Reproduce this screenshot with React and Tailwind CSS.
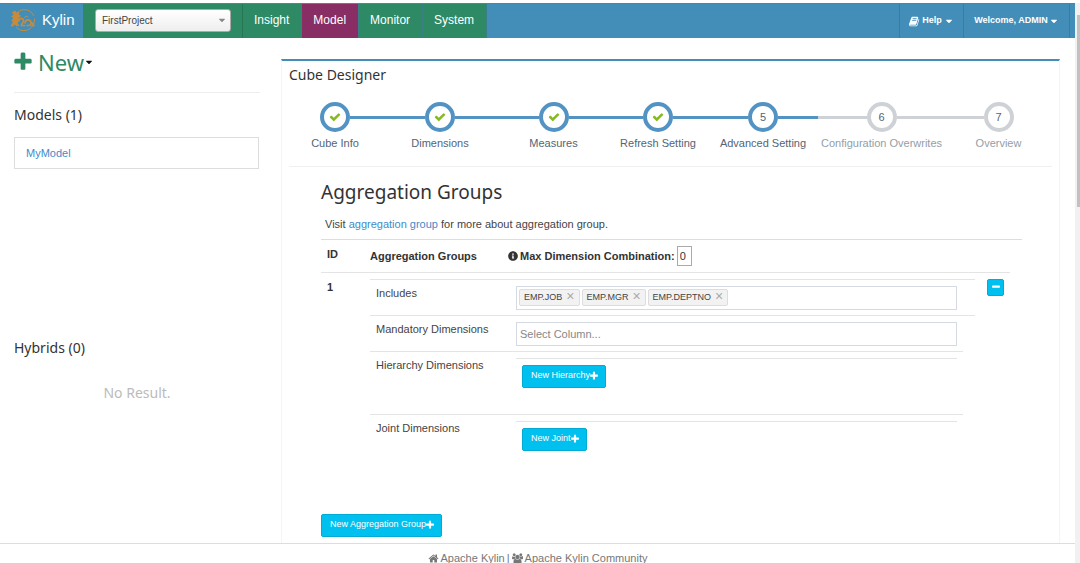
import React, { useState } from 'react';
import { FaCaretDown, FaInfoCircle } from 'react-icons/fa';

const ICONS = {
  plus: 'M1600 736v192q0 40-28 68t-68 28h-416v416q0 40-28 68t-68 28h-192q-40 0-68-28t-28-68v-416h-416q-40 0-68-28t-28-68v-192q0-40 28-68t68-28h416v-416q0-40 28-68t68-28h192q40 0 68 28t28 68v416h416q40 0 68 28t28 68z',
  minus: 'M1600 736v192q0 40-28 68t-68 28h-1216q-40 0-68-28t-28-68v-192q0-40 28-68t68-28h1216q40 0 68 28t28 68z',
  check: 'M1671 566q0 40-28 68l-724 724-136 136q-28 28-68 28t-68-28l-136-136-362-362q-28-28-28-68t28-68l136-136q28-28 68-28t68 28l294 295 656-657q28-28 68-28t68 28l136 136q28 28 28 68z',
  home: 'M1472 992v480q0 26-19 45t-45 19h-384v-384h-256v384h-384q-26 0-45-19t-19-45v-480q0-1 .5-3t.5-3l575-474 575 474q1 2 1 6zm223-69l-62 74q-8 9-21 11h-3q-13 0-21-7l-692-577-692 577q-12 8-24 7-13-2-21-11l-62-74q-8-10-7-23.5t11-21.5l719-599q32-26 76-26t76 26l244 204v-195q0-14 9-23t23-9h192q14 0 23 9t9 23v408l219 182q10 8 11 21.5t-7 23.5z',
  book: 'M1639 478q40 57 18 129l-275 906q-19 64-76.5 107.5t-122.5 43.5h-923q-77 0-148.5-53.5t-99.5-131.5q-24-67-2-127 0-4 3-27t4-37q1-8-3-21.5t-3-19.5q2-11 8-21t16.5-23.5 16.5-23.5q23-38 45-91.5t30-91.5q3-10 .5-30t-.5-28q3-11 17-28t17-23q21-36 42-92t25-90q1-9-2.5-32t.5-28q4-13 22-30.5t22-22.5q19-26 42.5-84.5t27.5-96.5q1-8-3-25.5t-2-26.5q2-8 9-18t18-23 17-21q8-12 16.5-30.5t15-35 16-36 19.5-32 26.5-23.5 36-11.5 47.5 5.5l-1 3q38-9 51-9h761q74 0 114 56t18 130l-274 906q-36 119-71.5 153.5t-128.5 34.5h-869q-27 0-38 15-11 16-1 43 24 70 144 70h923q29 0 56-15.5t35-41.5l300-987q7-22 5-57 38 15 59 43zm-1064 2q-4 13 2 22.5t20 9.5h608q13 0 25.5-9.5t16.5-22.5l21-64q4-13-2-22.5t-20-9.5h-608q-13 0-25.5 9.5t-16.5 22.5zm-83 256q-4 13 2 22.5t20 9.5h608q13 0 25.5-9.5t16.5-22.5l21-64q4-13-2-22.5t-20-9.5h-608q-13 0-25.5 9.5t-16.5 22.5z',
  users: 'M593 896q-162 5-265 128h-134q-82 0-138-40.500t-56-118.500q0-353 124-353 6 0 43.500 21t97.500 42.500 119 21.500q67 0 133-23-5 37-5 66 0 159 93 287zm1071 637q0 120-73 189.500t-194 69.500h-874q-121 0-194-69.500t-73-189.500q0-53 3.500-103.500t14-109 26.500-108.500 43-97.500 62-81 85.500-53.500 111.500-20q10 0 43 21.500t73 48 107 48 135 21.500 135-21.500 107-48 73-48 43-21.500q61 0 111.500 20t85.500 53.500 62 81 43 97.500 26.500 108.500 14 109 3.500 103.500zm-1024-1277q0 106-75 181t-181 75-181-75-75-181 75-181 181-75 181 75 75 181zm704 384q0 159-112.500 271.500t-271.500 112.500-271.500-112.500-112.500-271.500 112.500-271.500 271.500-112.500 271.500 112.500 112.500 271.500zm576 225q0 78-56 118.500t-138 40.500h-134q-103-123-265-128 93-128 93-287 0-29-5-66 66 23 133 23 59 0 119-21.500t97.500-42.500 43.500-21q124 0 124 353zm-128-609q0 106-75 181t-181 75-181-75-75-181 75-181 181-75 181 75 75 181z',
};

const Icon = ({ name, className }) => (
  <svg
    viewBox={name === 'users' ? '0 0 1920 1792' : '0 0 1792 1792'}
    fill="currentColor"
    className={className}
    aria-hidden="true"
  >
    <path d={ICONS[name]} />
  </svg>
);

const NAV = ['Insight', 'Model', 'Monitor', 'System'];

const STEPS = [
  'Cube Info',
  'Dimensions',
  'Measures',
  'Refresh Setting',
  'Advanced Setting',
  'Configuration Overwrites',
  'Overview',
];

const Logo = () => (
  <svg viewBox="0 0 26 24" className="h-6 w-[26px]" fill="none" stroke="#c98a3a" strokeLinecap="round" strokeLinejoin="round" aria-hidden="true">
    <path d="M10 2.6C15 .2 21 2 23.600 7.500M24.500 11C25 17 20 22.500 14 22.600C10.500 22.600 8 21.300 6.500 19.500" strokeWidth="1" />
    <path d="M2.500 4.500L5 3L6.500 5L9 3.500L8.500 6.500L10.500 8L8 10L9.500 12.500L7 15L9 17.500H6L4.500 16L3 18H1L3 14.500L2 12L4 10L1.500 8.500L4 7Z" fill="#c98a3a" strokeWidth=".8" />
    <path d="M8.500 12.500C10 9.500 13 10 13.500 12.500C14 15 11 15.500 11.500 17.500H14.500" strokeWidth="1.700" />
    <path d="M15 15C15.500 11 20 11 21 14C21.500 16 20.500 17.500 18.500 17.500H17M21 14.500C22.500 15.200 23.500 16.200 24 17.500H22" strokeWidth="1.700" />
    <path d="M14.500 9.500L16 8L18 9" strokeWidth="1" />
  </svg>
);

const Header = ({ active, onSelect }) => (
  <header className="mt-[3px] flex h-[35px] items-stretch border-t border-[#5b7f9b] bg-[#438eb9] text-white">
    <a href="#home" className="flex w-[83px] items-center gap-1.5 pb-0.5 pl-2.5 text-[15px]">
      <Logo />
      Kylin
    </a>
    <div className="flex items-stretch bg-[#2e8965]">
      <div className="flex w-40 items-center border-r border-[#277757] pr-[11px] pb-0.5 pl-3">
        <div className="relative w-full">
          <select
            aria-label="Project"
            className="block h-[23px] w-full appearance-none rounded-[3px] border border-[#aaa] bg-linear-to-b from-white to-[#eee] px-1.5 text-[10px] text-[#444]"
          >
            <option>FirstProject</option>
          </select>
          <FaCaretDown className="pointer-events-none absolute top-1.5 right-1 size-2.5 text-[#888]" />
        </div>
      </div>
      <nav className="flex items-stretch text-xs">
        {NAV.map((item) => (
          <a
            key={item}
            href={`#${item.toLowerCase()}`}
            onClick={() => onSelect(item)}
            className={`flex items-center border-r border-[#3a7f86] pr-3 pb-0.5 pl-[11px] ${
              active === item ? 'bg-[#892e65]' : ''
            }`}
          >
            {item}
          </a>
        ))}
      </nav>
    </div>
    <div className="ml-auto flex items-stretch pr-[5px] text-[9px] font-bold">
      <button type="button" className="flex w-16 items-center justify-center gap-0.5 border-l border-[#3a7ca3]">
        <Icon name="book" className="size-[11px]" />
        Help
        <FaCaretDown className="size-2.5" />
      </button>
      <button type="button" className="flex w-[107px] items-center justify-center gap-px border-x border-[#3a7ca3]">
        Welcome, ADMIN
        <FaCaretDown className="size-2.5" />
      </button>
    </div>
  </header>
);

const Sidebar = () => (
  <aside className="w-[260px] shrink-0 pl-3.5 font-['Noto_Sans',sans-serif] text-[#333]">
    <div className="border-b border-[#eee] pt-2.5 pb-4">
      <button type="button" className="-ml-0.5 flex h-7 items-center text-[22px] text-[#2e8965]">
        <Icon name="plus" className="mr-1 size-[22px]" />
        New
        <FaCaretDown className="size-2.5 text-[#111]" />
      </button>
    </div>
    <h3 className="mt-3 text-sm leading-5">Models (1)</h3>
    <ul className="mt-3 mr-px h-48 font-['Liberation_Sans',Arial,sans-serif] text-[11px]">
      <li className="border border-[#ddd] px-[11px] py-1.5 leading-[18px]">
        <a href="#mymodel" className="text-[#428bca]">MyModel</a>
      </li>
    </ul>
    <h3 className="mt-[9px] text-sm leading-5">Hybrids (0)</h3>
    <p className="mt-[25px] text-center text-sm leading-5 text-[#bbb]">No Result.</p>
  </aside>
);

const Steps = ({ current }) => (
  <ol className="grid grid-cols-[92fr_118fr_109fr_100fr_110fr_127fr_107fr] text-center text-[11px]">
    {STEPS.map((label, index) => {
      const number = index + 1;
      const reached = number <= current;
      const line = reached ? 'bg-[#5293c4]' : 'bg-[#ced1d6]';
      return (
        <li key={label}>
          <div className="flex items-center">
            <span className={`h-[3px] flex-1 ${index === 0 ? '' : line}`} />
            <span
              className={`flex size-[30px] items-center justify-center rounded-full border-4 bg-white text-[#546474] ${
                reached ? 'border-[#5293c4]' : 'border-[#ced1d6]'
              }`}
            >
              {number < current ? <Icon name="check" className="size-3 text-[#87ba21]" /> : number}
            </span>
            <span className={`h-[3px] flex-1 ${number === STEPS.length ? '' : line}`} />
          </div>
          <div className={`mt-1 leading-[14px] whitespace-nowrap ${reached ? 'text-[#546474]' : 'text-[#949ea7]'}`}>
            {label}
          </div>
        </li>
      );
    })}
  </ol>
);

const AddButton = ({ children }) => (
  <button
    type="button"
    className="flex h-[23px] items-center rounded-xs border border-[#00acd6] bg-[#00c0ef] pr-1.5 pl-2 text-[9px] text-white"
  >
    {children}
    <Icon name="plus" className="-ml-px size-2.5" />
  </button>
);

const FieldRow = ({ label, htmlFor, className, children }) => (
  <div className={`flex border-t border-[#e4e4e4] pt-1.5 pl-1.5 ${className}`}>
    <label htmlFor={htmlFor} className="w-[140px] shrink-0 leading-[14px]">
      {label}
    </label>
    {children}
  </div>
);

const AggregationGroup = () => {
  const [includes, setIncludes] = useState(['EMP.JOB', 'EMP.MGR', 'EMP.DEPTNO']);

  return (
    <div className="text-[#444]">
      <FieldRow label="Includes" htmlFor="includes" className="h-9 pr-[18px]">
        <div className="flex h-6 flex-1 items-center gap-0.5 border border-[#d5d9e2] px-0.5">
          {includes.map((column) => (
            <span
              key={column}
              className="flex h-[17px] items-center gap-1 rounded-xs border border-[#ddd] bg-[#f2f2f2] px-1 text-[9px] whitespace-nowrap"
            >
              {column}
              <button
                type="button"
                aria-label={`Remove ${column}`}
                onClick={() => setIncludes(includes.filter((c) => c !== column))}
                className="pb-1 text-sm leading-3 text-[#aaa]"
              >
                ×
              </button>
            </span>
          ))}
          <input id="includes" className="min-w-0 flex-1 outline-none" />
        </div>
      </FieldRow>
      <FieldRow label="Mandatory Dimensions" htmlFor="mandatory" className="h-9 pr-[18px]">
        <input
          id="mandatory"
          placeholder="Select Column..."
          className="h-6 min-w-0 flex-1 border border-[#d5d9e2] px-[3px] placeholder:text-[#888]"
        />
      </FieldRow>
      <FieldRow label="Hierarchy Dimensions" className="mr-3 h-[63px] pr-1.5">
        <div className="flex-1 border-t border-[#e4e4e4] px-1.5 pt-1.5">
          <AddButton>New Hierarchy</AddButton>
        </div>
      </FieldRow>
      <FieldRow label="Joint Dimensions" className="mr-3 h-[63px] pr-1.5">
        <div className="flex-1 border-t border-[#e4e4e4] px-1.5 pt-1.5">
          <AddButton>New Joint</AddButton>
        </div>
      </FieldRow>
    </div>
  );
};

const AggregationTable = () => (
  <div className="mt-[7px] border-t border-[#ddd]">
    <table className="mr-3 w-[calc(100%-12px)] table-fixed text-left text-[11px]">
      <colgroup>
        <col className="w-[49px]" />
        <col />
        <col className="w-[35px]" />
      </colgroup>
      <thead>
        <tr className="border-b border-[#e4e4e4] text-[#333]">
          <th className="h-8 px-1.5 pt-1.5 align-top">ID</th>
          <th className="align-middle">
            <div className="flex items-center">
              <span className="w-[138px]">Aggregation Groups</span>
              <label htmlFor="max-combination" className="flex items-center gap-0.5">
                <FaInfoCircle className="size-2.5" />
                Max Dimension Combination:
              </label>
              <input
                id="max-combination"
                defaultValue="0"
                className="ml-0.5 h-5 w-[15px] border border-[#aaa] px-0.5 font-normal"
              />
            </div>
          </th>
          <th aria-label="Action" />
        </tr>
      </thead>
      <tbody>
        <tr className="align-top">
          <td className="px-1.5 pt-1.5 font-bold text-[#333]">1</td>
          <td className="pt-1.5">
            <AggregationGroup />
          </td>
          <td className="pt-1.5 pl-3">
            <button
              type="button"
              aria-label="Remove group"
              className="flex size-[17px] items-center justify-center rounded-xs border border-[#00acd6] bg-[#00c0ef] text-white"
            >
              <Icon name="minus" className="size-2.5" />
            </button>
          </td>
        </tr>
      </tbody>
    </table>
  </div>
);

const Footer = () => (
  <footer className="flex h-5 items-center justify-center gap-0.5 border-t border-[#ddd] bg-white pt-2.5 text-[11px] text-[#777]">
    <a href="#kylin" className="flex items-center gap-0.5">
      <Icon name="home" className="size-[11px]" />
      Apache Kylin
    </a>
    |
    <a href="#community" className="flex items-center gap-0.5">
      <Icon name="users" className="size-[11px]" />
      Apache Kylin Community
    </a>
  </footer>
);

export default function App() {
  const [active, setActive] = useState('Model');

  return (
    <div className="flex h-screen overflow-hidden bg-white font-['Liberation_Sans',Arial,sans-serif]">
      <div className="flex min-w-0 flex-1 flex-col">
        <Header active={active} onSelect={setActive} />
        <div className="flex min-h-0 flex-1 overflow-hidden">
          <Sidebar />
          <main className="mt-[21px] mr-[15px] ml-[21px] min-w-0 flex-1 border-x border-t-2 border-x-[#f5f5f5] border-t-[#438eb9] px-[7px]">
            <h1 className="mt-1 font-['Noto_Sans',sans-serif] text-sm leading-5 text-[#333]">Cube Designer</h1>
            <div className="mt-[17px] border-b border-[#f0f0f0] pb-4">
              <Steps current={5} />
            </div>
            <section className="pr-[30px] pl-8">
              <h2 className="mt-3 font-['Noto_Sans',sans-serif] text-[19px] leading-[26px] text-[#333]">Aggregation Groups</h2>
              <p className="mt-[11px] pl-1 text-[11px] leading-4 text-[#444]">
                Visit <a href="#aggregation" className="text-[#428bca]">aggregation group</a> for more about aggregation group.
              </p>
              <AggregationTable />
              <div className="mt-[37px]">
                <AddButton>New Aggregation Group</AddButton>
              </div>
            </section>
          </main>
        </div>
        <Footer />
      </div>
      <div className="mt-[3px] w-[5px] bg-[#f1f1f1] pt-3 pl-0.5">
        <div className="h-[192px] bg-[#c1c1c1]" />
      </div>
    </div>
  );
}
